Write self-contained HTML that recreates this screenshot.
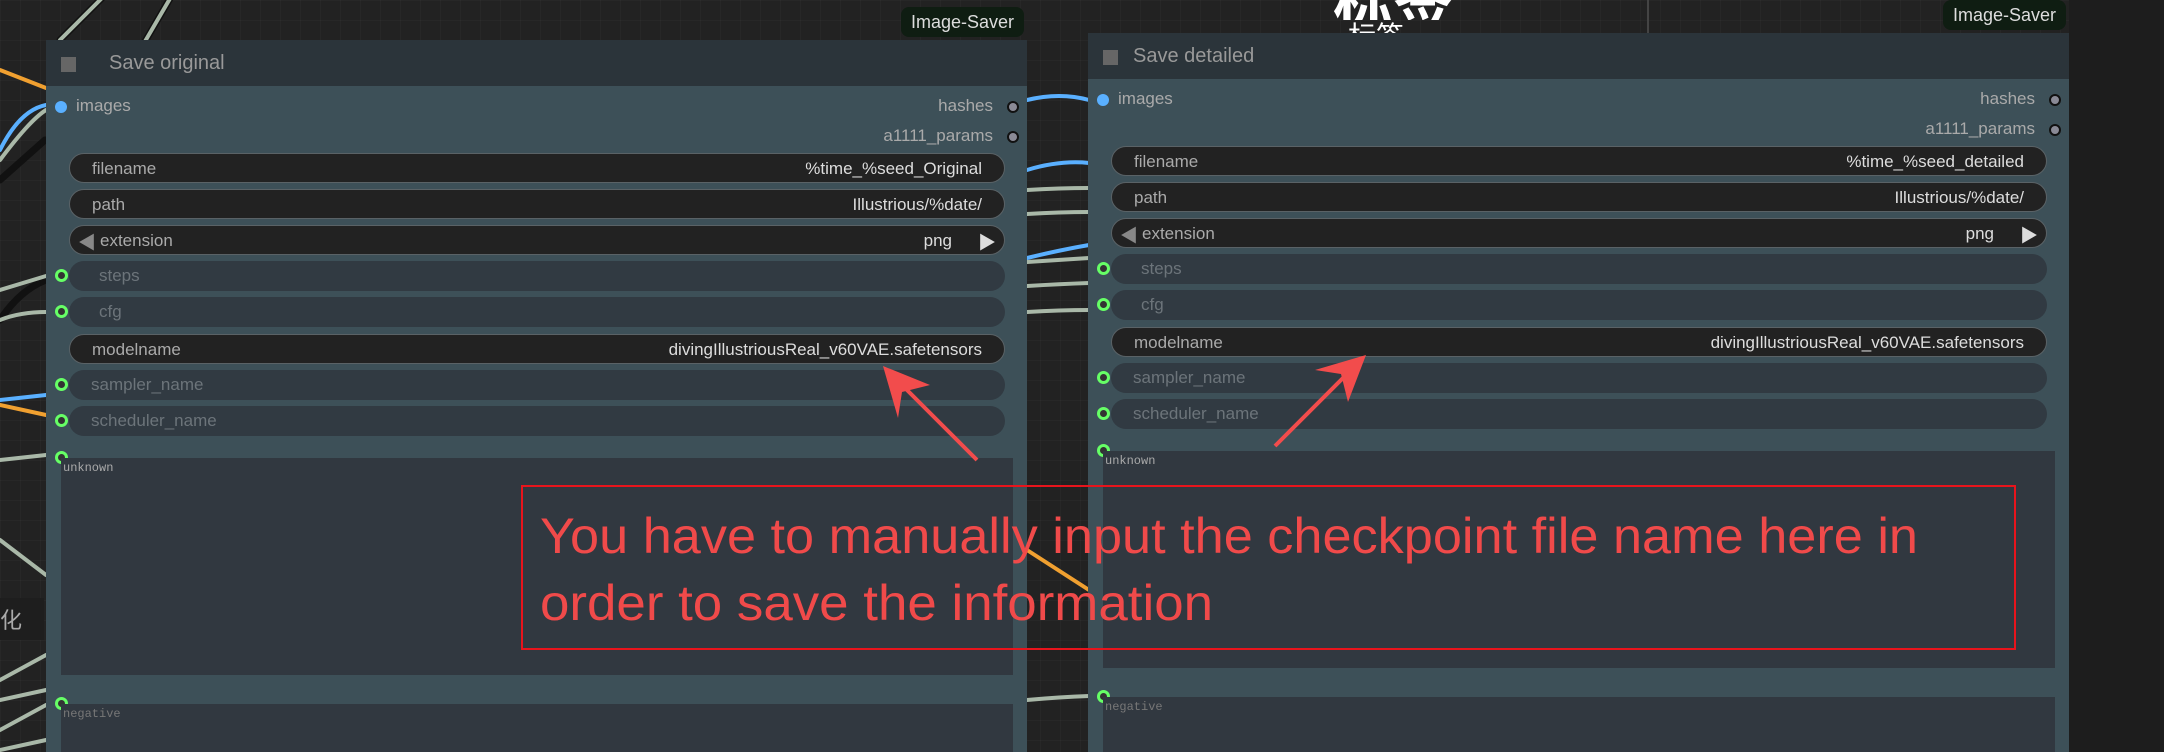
<!DOCTYPE html>
<html><head><meta charset="utf-8"><style>
*{margin:0;padding:0;box-sizing:border-box}
html,body{width:2164px;height:752px;overflow:hidden}
body{position:relative;background:#222;font-family:"Liberation Sans","Noto Sans CJK SC",sans-serif;
background-image:linear-gradient(rgba(255,255,255,.025) 1px,transparent 1px),linear-gradient(90deg,rgba(255,255,255,.025) 1px,transparent 1px);background-size:20px 20px}
.abs{position:absolute}
.node{position:absolute;width:981px;background:#3d5058;overflow:hidden}
.title{position:absolute;left:0;top:0;width:100%;height:46px;background:#2b343a;color:#999;font-size:20px}
.title .sq{position:absolute;left:15px;top:17px;width:15px;height:15px;background:#666}
.title span{position:absolute;left:63px;top:12px}
.lbl{position:absolute;font-size:17px;color:#aaa}
.dot{position:absolute;width:12px;height:12px;border-radius:50%}
.w{position:absolute;left:23px;width:936px;height:30px;border-radius:15px;background:#222;border:1.5px solid #5a6266;font-size:17px;color:#aaa}
.w .l{position:absolute;left:22px;top:5px}
.w .v{position:absolute;right:22px;top:5px;color:#ddd}
.w .ar{position:absolute;top:3px;font-size:18px}
.d{background:#313a42;border:none;color:#6c747a}
.d .l{left:30px}
.g{position:absolute;left:9px;width:13px;height:13px;border-radius:50%;border:3.5px solid #6f6;background:#333}
.ta{position:absolute;left:15px;width:952px;background:#313840;font-family:"Liberation Mono",monospace;font-size:12px;color:#aaa;padding:3px 2px}
.badge{position:absolute;width:123px;height:30px;background:#0f1d12;border-radius:8px;color:#ddd;font-size:18px;text-align:center;line-height:30px}
</style></head><body>

<svg class="abs" style="left:0;top:0" width="2164" height="752">
<g fill="none" stroke-linecap="round">
<g stroke="#111" stroke-width="7">
<path d="M60 40 L110 -10"/><path d="M140 50 L175 -10"/><path d="M0 180 L45 140"/><path d="M0 320 Q20 290 46 280"/>
</g>
<g stroke="#a9b8a8" stroke-width="4">
<path d="M60 40 L110 -10"/><path d="M140 50 L175 -10"/><path d="M0 160 Q30 120 46 110"/>
<path d="M0 290 L46 276"/><path d="M0 320 Q20 312 46 312"/><path d="M0 460 L46 455"/><path d="M0 540 L46 575"/>
<path d="M0 680 L46 655"/><path d="M0 700 L46 690"/><path d="M0 730 L46 705"/><path d="M0 750 L46 740"/>
<path d="M1027 190 Q1060 188 1089 188"/><path d="M1027 214 Q1060 212 1089 212"/><path d="M1027 262 Q1060 260 1089 258"/>
<path d="M1027 286 Q1060 284 1089 283"/><path d="M1027 312 Q1060 310 1089 310"/><path d="M1027 700 Q1060 697 1089 696"/>
</g>
<g stroke="#5ab0ff" stroke-width="4">
<path d="M0 150 Q20 110 46 105"/><path d="M0 400 L46 395"/>
<path d="M1027 100 Q1060 92 1089 100"/><path d="M1027 170 Q1060 160 1089 163"/><path d="M1027 258 Q1060 250 1089 245"/>
<path d="M2069 100 L2164 75"/><path d="M2069 135 L2164 110"/>
</g>
<g stroke="#f0a030" stroke-width="4">
<path d="M0 70 L46 88"/><path d="M0 405 L46 415"/><path d="M1027 550 L1089 590"/>
</g>
</g>
<line x1="1648" y1="0" x2="1648" y2="33" stroke="#444" stroke-width="2"/>
</svg>

<div class="abs" style="left:1333px;top:0;height:20px;overflow:hidden;width:180px"><div style="margin-top:-30px;color:#fff;font-size:60px;line-height:60px;font-family:'Noto Sans CJK SC',sans-serif;font-weight:bold">标签</div></div>
<div class="abs" style="left:1348px;top:20px;color:#fff;font-size:28px;line-height:30px;font-family:'Noto Sans CJK SC',sans-serif;height:13px;overflow:hidden">标签</div>
<div class="abs" style="left:0;top:598px;width:44px;height:42px;background:#1e1e1e;color:#aaa;font-size:22px;line-height:42px;font-family:'Noto Sans CJK SC',sans-serif;overflow:hidden">化</div>
<div class="abs" style="left:2069px;top:0;width:95px;height:752px;background:#1d1d1d"></div>

<div class="badge" style="left:901px;top:7px">Image-Saver</div>
<div class="badge" style="left:1943px;top:0px">Image-Saver</div>

<!-- LEFT NODE -->
<div class="node" style="left:46px;top:40px;height:712px">
<div class="title"><div class="sq"></div><span>Save original</span></div>
<div class="dot" style="left:9px;top:61px;background:#5ab0ff"></div><div class="lbl" style="left:30px;top:56px">images</div>
<div class="lbl" style="right:34px;top:56px">hashes</div><div class="dot" style="right:8px;top:61px;background:#8a8a96;border:2px solid #111"></div>
<div class="lbl" style="right:34px;top:86px">a1111_params</div><div class="dot" style="right:8px;top:91px;background:#8a8a96;border:2px solid #111"></div>
<div class="w" style="top:113px"><span class="l">filename</span><span class="v">%time_%seed_Original</span></div>
<div class="w" style="top:149px"><span class="l">path</span><span class="v">Illustrious/%date/</span></div>
<div class="w" style="top:185px"><span class="ar" style="left:8px;color:#888">◀</span><span class="l" style="left:30px">extension</span><span class="v" style="right:52px">png</span><span class="ar" style="right:8px;color:#ddd">▶</span></div>
<div class="g" style="top:229px"></div><div class="w d" style="top:221px"><span class="l">steps</span></div>
<div class="g" style="top:265px"></div><div class="w d" style="top:257px"><span class="l">cfg</span></div>
<div class="w" style="top:294px"><span class="l">modelname</span><span class="v">divingIllustriousReal_v60VAE.safetensors</span></div>
<div class="g" style="top:338px"></div><div class="w d" style="top:330px"><span class="l" style="left:22px">sampler_name</span></div>
<div class="g" style="top:374px"></div><div class="w d" style="top:366px"><span class="l" style="left:22px">scheduler_name</span></div>
<div class="g" style="top:411px"></div>
<div class="ta" style="top:418px;height:217px">unknown</div>
<div class="g" style="top:657px"></div>
<div class="ta" style="top:664px;height:48px;color:#777">negative</div>
</div>

<!-- RIGHT NODE -->
<div class="node" style="left:1088px;top:33px;height:719px">
<div class="title"><div class="sq"></div><span style="left:45px">Save detailed</span></div>
<div class="dot" style="left:9px;top:61px;background:#5ab0ff"></div><div class="lbl" style="left:30px;top:56px">images</div>
<div class="lbl" style="right:34px;top:56px">hashes</div><div class="dot" style="right:8px;top:61px;background:#8a8a96;border:2px solid #111"></div>
<div class="lbl" style="right:34px;top:86px">a1111_params</div><div class="dot" style="right:8px;top:91px;background:#8a8a96;border:2px solid #111"></div>
<div class="w" style="top:113px"><span class="l">filename</span><span class="v">%time_%seed_detailed</span></div>
<div class="w" style="top:149px"><span class="l">path</span><span class="v">Illustrious/%date/</span></div>
<div class="w" style="top:185px"><span class="ar" style="left:8px;color:#888">◀</span><span class="l" style="left:30px">extension</span><span class="v" style="right:52px">png</span><span class="ar" style="right:8px;color:#ddd">▶</span></div>
<div class="g" style="top:229px"></div><div class="w d" style="top:221px"><span class="l">steps</span></div>
<div class="g" style="top:265px"></div><div class="w d" style="top:257px"><span class="l">cfg</span></div>
<div class="w" style="top:294px"><span class="l">modelname</span><span class="v">divingIllustriousReal_v60VAE.safetensors</span></div>
<div class="g" style="top:338px"></div><div class="w d" style="top:330px"><span class="l" style="left:22px">sampler_name</span></div>
<div class="g" style="top:374px"></div><div class="w d" style="top:366px"><span class="l" style="left:22px">scheduler_name</span></div>
<div class="g" style="top:411px"></div>
<div class="ta" style="top:418px;height:217px">unknown</div>
<div class="g" style="top:657px"></div>
<div class="ta" style="top:664px;height:55px;color:#777">negative</div>
</div>

<!-- annotations -->
<svg class="abs" style="left:0;top:0" width="2164" height="752">
<g fill="#f24c4c" stroke="#f24c4c">
<line x1="977" y1="460" x2="905" y2="388" stroke-width="4"/>
<polygon points="883,366 930,385 902,392 898,418" stroke="none"/>
<line x1="1275" y1="446" x2="1345" y2="376" stroke-width="4"/>
<polygon points="1366,355 1348,402 1341,374 1315,370" stroke="none"/>
</g>
<rect x="522" y="486" width="1493" height="163" fill="none" stroke="#e8141c" stroke-width="2"/>
<text x="540" y="553" fill="#f04a4a" font-family="Liberation Sans, sans-serif" font-size="50" textLength="1378" lengthAdjust="spacingAndGlyphs">You have to manually input the checkpoint file name here in</text>
<text x="540" y="620" fill="#f04a4a" font-family="Liberation Sans, sans-serif" font-size="50" textLength="673" lengthAdjust="spacingAndGlyphs">order to save the information</text>
</svg>
</body></html>
